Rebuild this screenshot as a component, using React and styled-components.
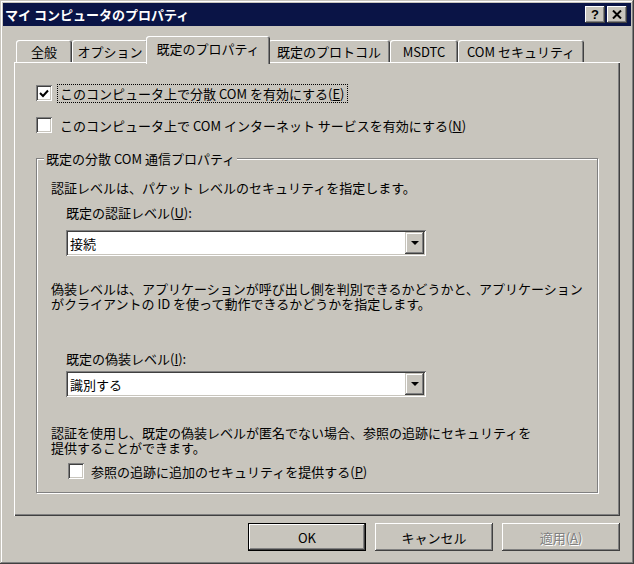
import React from "react";
import styled, { createGlobalStyle } from "styled-components";

const FACE = "#c8c5bd";
const SHADOW = "#808080";
const DARK = "#404040";
const HILITE = "#ffffff";
const TITLE = "#0a1446";

const GlobalStyle = createGlobalStyle`
  html, body {
    margin: 0;
    padding: 0;
    background: ${FACE};
  }
  body {
    font-family: "Noto Sans CJK JP", "DejaVu Sans", sans-serif;
    font-size: 13px;
    color: #000;
  }
`;

const Window = styled.div`
  width: 634px;
  height: 564px;
  box-sizing: border-box;
  padding: 3px;
  background: ${FACE};
  box-shadow: inset -1px -1px ${DARK}, inset 1px 1px ${FACE},
    inset -2px -2px ${SHADOW}, inset 2px 2px ${HILITE};
  display: flex;
  flex-direction: column;
`;

const TitleBar = styled.div`
  height: 23px;
  background: ${TITLE};
  color: #fff;
  font-weight: bold;
  display: flex;
  align-items: center;
  padding: 0 4px 0 2px;
  line-height: 15px;
`;

const TitleText = styled.span`
  flex: 1;
`;

const TitleButtons = styled.div`
  display: flex;
  gap: 2px;
`;

const TitleButton = styled.div`
  width: 20px;
  height: 17px;
  box-sizing: border-box;
  background: ${FACE};
  box-shadow: inset -1px -1px ${DARK}, inset 1px 1px ${HILITE},
    inset -2px -2px ${SHADOW};
  display: flex;
  align-items: center;
  justify-content: center;
  color: #000;
  font-family: "Liberation Sans", sans-serif;
  font-weight: bold;
  font-size: 13px;
  padding-bottom: 1px;
`;

const Content = styled.div`
  flex: 1;
  display: flex;
  flex-direction: column;
  padding: 10px 11px 0 11px;
`;

const TabStrip = styled.div`
  display: flex;
  align-items: flex-end;
  height: 26px;
  padding-left: 2px;
`;

const Tab = styled.div`
  width: ${(p) => p.$w}px;
  height: ${(p) => (p.$active ? 28 : 22)}px;
  margin: ${(p) => (p.$active ? "0 -2px -2px" : "0")};
  position: ${(p) => (p.$active ? "relative" : "static")};
  z-index: ${(p) => (p.$active ? 1 : "auto")};
  box-sizing: border-box;
  flex-shrink: 0;
  background: ${FACE};
  border-radius: 3px 3px 0 0;
  box-shadow: inset 1px 1px ${HILITE}, inset -1px 0 ${DARK},
    inset -2px 0 ${SHADOW};
  display: flex;
  align-items: center;
  justify-content: center;
  padding-bottom: ${(p) => (p.$active ? 3 : 0)}px;
  line-height: 15px;
  white-space: nowrap;
`;

const Panel = styled.div`
  height: 454px;
  box-sizing: border-box;
  padding: 21px 22px 0 22px;
  box-shadow: inset 1px 1px ${HILITE}, inset -1px -1px ${DARK},
    inset -2px -2px ${SHADOW};
  display: flex;
  flex-direction: column;
`;

const CheckRow = styled.div`
  display: flex;
  align-items: center;
  height: 20px;
  margin-top: ${(p) => p.$top || 0}px;
  margin-left: ${(p) => p.$indent || 0}px;
  white-space: nowrap;
`;

const Box = styled.div`
  width: 16px;
  height: 16px;
  box-sizing: border-box;
  background: #fff;
  box-shadow: inset 1px 1px ${SHADOW}, inset -1px -1px ${HILITE},
    inset 2px 2px ${DARK}, inset -2px -2px ${FACE};
  display: flex;
  align-items: center;
  justify-content: center;
  margin-right: ${(p) => p.$gap || 5}px;
  flex-shrink: 0;
`;

const CheckLabel = styled.span`
  line-height: 15px;
  padding: 1px 2px;
  border: 1px dotted ${(p) => (p.$focus ? "#000" : "transparent")};
`;

const U = styled.span`
  text-decoration: underline;
`;

const Group = styled.div`
  position: relative;
  margin-top: 23px;
  height: 335px;
  box-sizing: border-box;
  border: 1px solid ${SHADOW};
  box-shadow: 1px 1px 0 ${HILITE}, inset 1px 1px 0 ${HILITE};
  padding: 21px 14px 0 14px;
  display: flex;
  flex-direction: column;
`;

const Legend = styled.span`
  position: absolute;
  top: -8px;
  left: 7px;
  padding: 0 2px;
  background: ${FACE};
  line-height: 15px;
`;

const Text = styled.div`
  line-height: 15px;
  white-space: nowrap;
  margin-top: ${(p) => p.$top || 0}px;
  margin-left: ${(p) => p.$indent || 0}px;
`;

const Combo = styled.div`
  width: 360px;
  height: 26px;
  box-sizing: border-box;
  margin-top: ${(p) => p.$top || 0}px;
  margin-left: 15px;
  background: #fff;
  box-shadow: inset 1px 1px ${SHADOW}, inset -1px -1px ${HILITE},
    inset 2px 2px ${DARK}, inset -2px -2px ${FACE};
  display: flex;
  align-items: center;
  padding: 2px;
`;

const ComboValue = styled.span`
  flex: 1;
  padding-left: 2px;
  line-height: 15px;
`;

const DropButton = styled.div`
  width: 19px;
  height: 22px;
  box-sizing: border-box;
  background: ${FACE};
  box-shadow: inset -1px -1px ${DARK}, inset 1px 1px ${FACE},
    inset -2px -2px ${SHADOW}, inset 2px 2px ${HILITE};
  display: flex;
  align-items: center;
  justify-content: center;
`;

const ButtonRow = styled.div`
  display: flex;
  justify-content: flex-end;
  gap: 9px;
  margin-top: 7px;
`;

const Button = styled.div`
  width: 118px;
  height: 28px;
  box-sizing: border-box;
  background: ${FACE};
  box-shadow: ${(p) =>
    p.$default
      ? `inset 0 0 0 1px #000, inset -2px -2px ${DARK}, inset 2px 2px ${HILITE}, inset -3px -3px ${SHADOW}`
      : `inset -1px -1px ${DARK}, inset 1px 1px ${HILITE}, inset -2px -2px ${SHADOW}`};
  display: flex;
  align-items: center;
  justify-content: center;
  line-height: 15px;
  color: ${(p) => (p.$disabled ? SHADOW : "#000")};
  text-shadow: ${(p) => (p.$disabled ? `1px 1px 0 ${HILITE}` : "none")};
`;

const CloseIcon = () => (
  <svg width="10" height="9" viewBox="0 0 10 9">
    <path d="M1 0.5 L9 8.5 M9 0.5 L1 8.5" stroke="#000" strokeWidth="2" />
  </svg>
);

const Check = () => (
  <svg width="10" height="9" viewBox="0 0 10 9">
    <path d="M1 4 L4 7 L9 1.5" stroke="#000" strokeWidth="2" fill="none" />
  </svg>
);

const Arrow = () => (
  <svg width="8" height="4" viewBox="0 0 8 4">
    <path d="M0 0 H8 L4 4 Z" fill="#000" />
  </svg>
);

const tabs = [
  { label: "全般", w: 56 },
  { label: "オプション", w: 76 },
  { label: "既定のプロパティ", w: 124, active: true },
  { label: "既定のプロトコル", w: 122 },
  { label: "MSDTC", w: 68 },
  { label: "COM セキュリティ", w: 126 },
];

export default function App() {
  return (
    <>
      <GlobalStyle />
      <Window>
        <TitleBar>
          <TitleText>マイ コンピュータのプロパティ</TitleText>
          <TitleButtons>
            <TitleButton>?</TitleButton>
            <TitleButton>
              <CloseIcon />
            </TitleButton>
          </TitleButtons>
        </TitleBar>
        <Content>
          <TabStrip>
            {tabs.map((t) => (
              <Tab key={t.label} $w={t.w} $active={t.active}>
                {t.label}
              </Tab>
            ))}
          </TabStrip>
          <Panel>
            <CheckRow>
              <Box>
                <Check />
              </Box>
              <CheckLabel $focus>
                このコンピュータ上で分散 COM を有効にする(<U>E</U>)
              </CheckLabel>
            </CheckRow>
            <CheckRow $top={12}>
              <Box />
              <CheckLabel>
                このコンピュータ上で COM インターネット サービスを有効にする(<U>N</U>)
              </CheckLabel>
            </CheckRow>
            <Group>
              <Legend>既定の分散 COM 通信プロパティ</Legend>
              <Text>認証レベルは、パケット レベルのセキュリティを指定します。</Text>
              <Text $top={10} $indent={15}>
                既定の認証レベル(<U>U</U>):
              </Text>
              <Combo $top={10}>
                <ComboValue>接続</ComboValue>
                <DropButton>
                  <Arrow />
                </DropButton>
              </Combo>
              <Text $top={25}>
                偽装レベルは、アプリケーションが呼び出し側を判別できるかどうかと、アプリケーション
                <br />
                がクライアントの ID を使って動作できるかどうかを指定します。
              </Text>
              <Text $top={40} $indent={15}>
                既定の偽装レベル(<U>I</U>):
              </Text>
              <Combo $top={5}>
                <ComboValue>識別する</ComboValue>
                <DropButton>
                  <Arrow />
                </DropButton>
              </Combo>
              <Text $top={28}>
                認証を使用し、既定の偽装レベルが匿名でない場合、参照の追跡にセキュリティを
                <br />
                提供することができます。
              </Text>
              <CheckRow $top={6} $indent={17}>
                <Box $gap={4} />
                <CheckLabel>
                  参照の追跡に追加のセキュリティを提供する(<U>P</U>)
                </CheckLabel>
              </CheckRow>
            </Group>
          </Panel>
          <ButtonRow>
            <Button $default>OK</Button>
            <Button>キャンセル</Button>
            <Button $disabled>
              適用(<U>A</U>)
            </Button>
          </ButtonRow>
        </Content>
      </Window>
    </>
  );
}
